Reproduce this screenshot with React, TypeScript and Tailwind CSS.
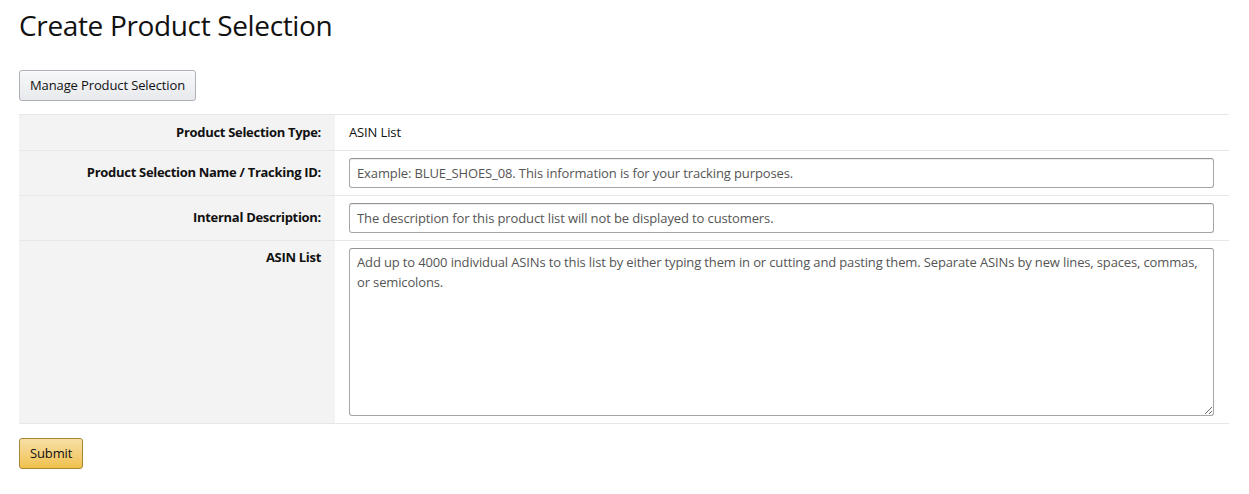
export default function App() {
  const rows = [
    { label: 'Product Selection Name / Tracking ID:', placeholder: 'Example: BLUE_SHOES_08. This information is for your tracking purposes.' },
    { label: 'Internal Description:', placeholder: 'The description for this product list will not be displayed to customers.' },
  ]

  return (
    <div className="min-h-screen bg-white px-[19px] pt-[6px] text-[#111] tracking-[-0.12px] font-['Open_Sans',sans-serif]">
      <h1 className="text-[28px] leading-[38px] font-normal tracking-[-0.35px] text-[#111]">Create Product Selection</h1>

      <button className="mt-[26px] h-[31px] px-[10px] rounded-[3px] border border-[#adb1b8] bg-gradient-to-b from-[#f7f8fa] to-[#e7e9ec] text-[13px] text-[#111] shadow-[inset_0_1px_0_rgba(255,255,255,0.6)]">
        Manage Product Selection
      </button>

      <div className="mt-[13px] w-[1210px] border-t border-[#e7e7e7] text-[13px]">
        <div className="flex border-b border-[#e7e7e7]">
          <div className="w-[316px] shrink-0 bg-[#f3f3f3] pr-[14px] h-[35px] flex items-center justify-end font-bold tracking-[-0.3px]">
            Product Selection Type:
          </div>
          <div className="flex items-center pl-[14px]">ASIN List</div>
        </div>

        {rows.map(r => (
          <div key={r.label} className="flex border-b border-[#e7e7e7]">
            <div className="w-[316px] shrink-0 bg-[#f3f3f3] pr-[14px] flex items-center justify-end font-bold tracking-[-0.3px]">
              {r.label}
            </div>
            <div className="flex-1 pl-[14px] pr-[15px] py-[7px]">
              <input
                className="w-full h-[30px] px-[7px] rounded-[3px] border border-[#a6a6a6] border-t-[#949494] text-[13px] tracking-[-0.12px] placeholder:text-[#555] shadow-[inset_0_1px_0_rgba(0,0,0,0.07)] outline-none"
                placeholder={r.placeholder}
              />
            </div>
          </div>
        ))}

        <div className="flex border-b border-[#e7e7e7]">
          <div className="w-[316px] shrink-0 bg-[#f3f3f3] pr-[14px] pt-[7px] text-right font-bold tracking-[-0.3px]">ASIN List</div>
          <div className="flex-1 pl-[14px] pr-[15px] py-[7px]">
            <textarea
              className="block w-full h-[168px] pl-[7px] pr-[4px] py-[3px] rounded-[3px] border border-[#a6a6a6] border-t-[#949494] text-[13px] leading-[20px] tracking-[-0.14px] placeholder:text-[#555] outline-none"
              placeholder="Add up to 4000 individual ASINs to this list by either typing them in or cutting and pasting them. Separate ASINs by new lines, spaces, commas, or semicolons."
            />
          </div>
        </div>
      </div>

      <button className="mt-[14px] h-[31px] px-[10px] rounded-[3px] border border-[#a88734] bg-gradient-to-b from-[#f7dfa5] to-[#f0c14b] text-[13px] text-[#111]">
        Submit
      </button>
    </div>
  )
}
